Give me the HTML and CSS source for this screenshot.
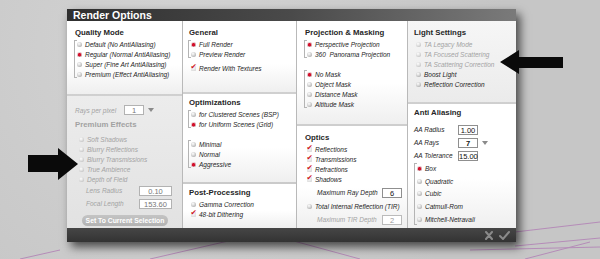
FILE: index.html
```html
<!DOCTYPE html>
<html lang="en">
<head>
    <meta charset="UTF-8">
    <title>Render Options</title>
    <link rel="stylesheet" href="styles.css">
</head>
<body>

    <svg class="floor" width="600" height="259" viewBox="0 0 600 259">
        <g stroke="#b58cb8" stroke-width="1" fill="none">
            <path d="M150 259 L250 236"/>
            <path d="M360 259 L290 240"/>
            <path d="M515 232 L600 222"/>
            <path d="M515 246 L600 238"/>
            <path d="M470 250 L600 247"/>
            <path d="M525 259 L590 242"/>
            <path d="M20 259 L60 250"/>
        </g>
    </svg>

    <div class="dialog">
        <div class="titlebar">Render Options</div>

        <div class="panes">

            <!-- Quality / premium effects -->
            <div class="col col-1">
                <section class="sec sec-quality">
                    <h2>Quality Mode</h2>
                    <div class="group">
                        <div class="opt"><span class="radio"></span>Default (No AntiAliasing)</div>
                        <div class="opt"><span class="radio on"></span>Regular (Normal AntiAliasing)</div>
                        <div class="opt"><span class="radio"></span>Super (Fine Art AntiAliasing)</div>
                        <div class="opt"><span class="radio"></span>Premium (Effect AntiAliasing)</div>
                    </div>
                </section>
                <section class="sec sec-premium off">
                    <div class="field-row rays">
                        <span class="label">Rays per pixel</span>
                        <span class="field">1</span>
                        <span class="drop"></span>
                    </div>
                    <h2>Premium Effects</h2>
                    <div class="list">
                        <div class="opt"><span class="radio"></span>Soft Shadows</div>
                        <div class="opt"><span class="radio"></span>Blurry Reflections</div>
                        <div class="opt"><span class="radio"></span>Blurry Transmissions</div>
                        <div class="opt"><span class="radio"></span>True Ambience</div>
                        <div class="opt"><span class="radio"></span>Depth of Field</div>
                    </div>
                    <div class="field-row lens">
                        <span class="label">Lens Radius</span>
                        <span class="field">0.10</span>
                    </div>
                    <div class="field-row lens">
                        <span class="label">Focal Length</span>
                        <span class="field">153.60</span>
                    </div>
                    <button class="pill">Set To Current Selection</button>
                </section>
            </div>

            <!-- General / optimizations / post -->
            <div class="col col-2">
                <section class="sec sec-general">
                    <h2>General</h2>
                    <div class="group">
                        <div class="opt"><span class="radio on"></span>Full Render</div>
                        <div class="opt"><span class="radio"></span>Preview Render</div>
                    </div>
                    <div class="opt solo"><span class="check"></span>Render With Textures</div>
                </section>
                <section class="sec sec-optim">
                    <h2>Optimizations</h2>
                    <div class="group">
                        <div class="opt"><span class="radio"></span>for Clustered Scenes (BSP)</div>
                        <div class="opt"><span class="radio on"></span>for Uniform Scenes (Grid)</div>
                    </div>
                    <div class="group spaced">
                        <div class="opt"><span class="radio"></span>Minimal</div>
                        <div class="opt"><span class="radio"></span>Normal</div>
                        <div class="opt"><span class="radio on"></span>Aggressive</div>
                    </div>
                </section>
                <section class="sec sec-post">
                    <h2>Post-Processing</h2>
                    <div class="list">
                        <div class="opt"><span class="radio"></span>Gamma Correction</div>
                        <div class="opt"><span class="check"></span>48-bit Dithering</div>
                    </div>
                </section>
            </div>

            <!-- Projection / optics -->
            <div class="col col-3">
                <section class="sec sec-projection">
                    <h2>Projection &amp; Masking</h2>
                    <div class="group">
                        <div class="opt"><span class="radio on"></span>Perspective Projection</div>
                        <div class="opt"><span class="radio"></span>360&nbsp; Panorama Projection</div>
                    </div>
                    <div class="group spaced">
                        <div class="opt"><span class="radio on"></span>No Mask</div>
                        <div class="opt"><span class="radio"></span>Object Mask</div>
                        <div class="opt"><span class="radio"></span>Distance Mask</div>
                        <div class="opt"><span class="radio"></span>Altitude Mask</div>
                    </div>
                </section>
                <section class="sec sec-optics">
                    <h2>Optics</h2>
                    <div class="list">
                        <div class="opt"><span class="check"></span>Reflections</div>
                        <div class="opt"><span class="check"></span>Transmissions</div>
                        <div class="opt"><span class="check"></span>Refractions</div>
                        <div class="opt"><span class="check"></span>Shadows</div>
                    </div>
                    <div class="field-row depth">
                        <span class="label">Maximum Ray Depth</span>
                        <span class="field">6</span>
                    </div>
                    <div class="opt tir"><span class="radio"></span>Total Internal Reflection (TIR)</div>
                    <div class="field-row depth off">
                        <span class="label">Maximum TIR Depth</span>
                        <span class="field">2</span>
                    </div>
                </section>
            </div>

            <!-- Light / anti aliasing -->
            <div class="col col-4">
                <section class="sec sec-light">
                    <h2>Light Settings</h2>
                    <div class="list">
                        <div class="opt off"><span class="radio"></span>TA Legacy Mode</div>
                        <div class="opt off"><span class="radio"></span>TA Focused Scattering</div>
                        <div class="opt off"><span class="radio"></span>TA Scattering Correction</div>
                        <div class="opt"><span class="radio"></span>Boost Light</div>
                        <div class="opt"><span class="radio"></span>Reflection Correction</div>
                    </div>
                </section>
                <section class="sec sec-aa">
                    <h2>Anti Aliasing</h2>
                    <div class="aa-fields">
                        <div class="field-row aa">
                            <span class="label">AA Radius</span>
                            <span class="field">1.00</span>
                        </div>
                        <div class="field-row aa">
                            <span class="label">AA Rays</span>
                            <span class="field bold">7</span>
                            <span class="drop"></span>
                        </div>
                        <div class="field-row aa">
                            <span class="label">AA Tolerance</span>
                            <span class="field">15.00</span>
                        </div>
                    </div>
                    <div class="group filters">
                        <div class="opt"><span class="radio on"></span>Box</div>
                        <div class="opt"><span class="radio"></span>Quadratic</div>
                        <div class="opt"><span class="radio"></span>Cubic</div>
                        <div class="opt"><span class="radio"></span>Catmull-Rom</div>
                        <div class="opt"><span class="radio"></span>Mitchell-Netravali</div>
                    </div>
                </section>
            </div>

        </div>

        <div class="footbar">
            <svg class="foot-icon" width="10" height="9" viewBox="0 0 10 9">
                <path d="M2 1 L8 8 M8 1 L2 8" stroke="#8a8a8a" stroke-width="2" stroke-linecap="round"/>
            </svg>
            <svg class="foot-icon" width="11" height="9" viewBox="0 0 11 9">
                <path d="M1 5 L4 8 L10 1" stroke="#8a8a8a" stroke-width="2" fill="none" stroke-linecap="round"/>
            </svg>
        </div>
    </div>

    <!-- callout arrows drawn over the screenshot -->
    <svg class="arrows" width="600" height="259" viewBox="0 0 600 259">
        <polygon points="28,155 58,155 58,148 78,164 58,180 58,172 28,172" fill="#0a0a0a"/>
        <polygon points="500,62 519,50 519,57 563,57 563,68 519,68 519,74" fill="#0a0a0a"/>
    </svg>

</body>
</html>
```

FILE: styles.css
```css
/* Page / backdrop */
body {
    margin: 0;
    width: 600px;
    height: 259px;
    overflow: hidden;
    position: relative;
    font-family: 'Liberation Sans', Arial, sans-serif;
    background-color: #cbcbcb;
    background-image: radial-gradient(circle at 30% 20%, #d4d4d4, #c6c6c6 70%);
    padding: 9px 0 0 67px;
    box-sizing: border-box;
}

.floor,
.arrows {
    position: absolute;
    left: 0;
    top: 0;
}

.arrows {
    z-index: 5;
}

/* Dialog */
.dialog {
    position: relative;
    width: 449px;
    height: 233px;
    display: flex;
    flex-direction: column;
    box-shadow: 4px 5px 9px rgba(0, 0, 0, 0.65);
}

.titlebar {
    height: 12px;
    line-height: 12px;
    padding-left: 6px;
    font-size: 10.5px;
    font-weight: 700;
    color: #fff;
    background: linear-gradient(to right, #2f2f2f, #4a4a4a 50%, #7a7a7a);
}

.panes {
    flex: 1;
    display: flex;
    gap: 1px;
    background-color: #b9b9b9;
}

.col {
    display: flex;
    flex-direction: column;
    gap: 2px;
    background: linear-gradient(#d4d4d4, #c8c8c8);
}

.col-1 { width: 115px; }
.col-2 { width: 113px; }
.col-3 { width: 110px; }
.col-4 { width: 108px; }

.sec {
    padding: 3px 6px 0 8px;
    background: linear-gradient(#ffffff 60%, #efefef);
    color: #1e1e1e;
}

.col-2 .sec { padding-left: 6px; }
.col-4 .sec { padding-left: 6px; }

.sec-quality    { height: 67px; padding-top: 6px; }
.sec-general    { height: 65px; padding-top: 6px; }
.sec-optim      { height: 85px; }
.sec-projection { height: 97px; padding-top: 6px; }
.sec-light      { height: 75px; padding-top: 6px; background: linear-gradient(#f6f6f6, #ebebeb); }
.sec-optics     { padding-top: 6px; }

.sec-premium,
.sec-post,
.sec-optics,
.sec-aa {
    flex: 1;
}

.sec-premium {
    padding-top: 8px;
    background: linear-gradient(#ececec, #e2e2e2);
}

h2 {
    margin: 0;
    height: 12px;
    line-height: 12px;
    font-size: 7.8px;
    font-weight: 700;
    color: #262626;
}

.off,
.off h2,
.opt.off {
    color: #a3a3a3;
}

/* Options */
.group {
    position: relative;
    padding-left: 3px;
    margin-left: -1px;
}

.group::before {
    content: "";
    position: absolute;
    left: 0;
    top: 1px;
    bottom: 1px;
    width: 2px;
    border: 1px solid #b4b4b4;
    border-right: none;
}

.group.spaced { margin-top: 10px; }

.list { padding-left: 2px; }

.opt {
    height: 10px;
    display: flex;
    align-items: center;
    font-size: 6.5px;
    font-style: italic;
    white-space: nowrap;
}

.opt.solo { margin-top: 4px; padding-left: 2px; }
.opt.tir  { margin-top: 2px; padding-left: 2px; }

.radio {
    flex: none;
    width: 5px;
    height: 5px;
    margin-right: 3px;
    border-radius: 50%;
    background: radial-gradient(circle at 40% 35%, #ffffff, #c4c4c4 60%, #8c8c8c);
}

.radio.on {
    background:
        radial-gradient(circle at 50% 55%, #d3102c 0 1.4px, transparent 2px),
        radial-gradient(circle at 40% 35%, #ffffff, #d8a0a8 60%, #8c6068);
}

.off .radio {
    background: radial-gradient(circle at 40% 35%, #ffffff, #d4d4d4 60%, #a8a8a8);
}

.check {
    flex: none;
    position: relative;
    width: 5px;
    height: 5px;
    margin-right: 3px;
    margin-top: 1px;
    border-radius: 1px;
    background: radial-gradient(circle at 40% 35%, #ffffff, #cfcfcf);
}

.check::after {
    content: "\2714";
    position: absolute;
    left: -0.5px;
    top: -4.5px;
    font-family: 'DejaVu Sans', sans-serif;
    font-style: normal;
    font-size: 7.5px;
    color: #d01426;
}

/* Fields */
.field-row {
    display: flex;
    align-items: center;
    height: 13px;
    font-size: 6.5px;
    font-style: italic;
}

.field {
    width: 20px;
    height: 10px;
    line-height: 10px;
    box-sizing: border-box;
    border: 1px solid #8f8f8f;
    background: #fff;
    font-size: 7.5px;
    font-style: normal;
    text-align: center;
    color: #111;
}

.field.bold { font-weight: 700; }

.drop {
    width: 0;
    height: 0;
    margin-left: 4px;
    border-left: 3px solid transparent;
    border-right: 3px solid transparent;
    border-top: 4px solid #8a8a8a;
}

.rays { height: 12px; }
.rays .label { margin-right: 8px; }
.rays .field { color: #777; border-color: #b2b2b2; }
.sec-premium h2 { margin-top: 3px; color: #a2a2a2; }
.sec-premium .list { margin-top: 3px; padding-left: 4px; }

.lens {
    padding-left: 11px;
    width: 86px;
    justify-content: space-between;
}

.lens .field { width: 33px; color: #777; border-color: #b2b2b2; }
.sec-premium .lens:first-of-type { margin-top: 1px; }

.pill {
    display: block;
    margin: 5px 0 0 7px;
    width: 86px;
    height: 11px;
    padding: 0;
    border: none;
    border-radius: 6px;
    background: linear-gradient(#c4c4c4, #b2b2b2);
    color: #fff;
    font-family: inherit;
    font-size: 6.8px;
    font-weight: 700;
}

.depth {
    margin-top: 2px;
    padding-left: 12px;
    width: 85px;
    justify-content: space-between;
}

.depth.off .field { color: #999; border-color: #bbb; }

.aa-fields { margin-top: 4px; }

.aa .label { width: 44px; }

.filters { margin-left: 0; }

.filters .opt { height: 12.75px; }

/* Bottom bar */
.footbar {
    height: 14px;
    display: flex;
    align-items: center;
    justify-content: flex-end;
    gap: 5px;
    padding-right: 6px;
    background: linear-gradient(#464646, #333333);
}
```
